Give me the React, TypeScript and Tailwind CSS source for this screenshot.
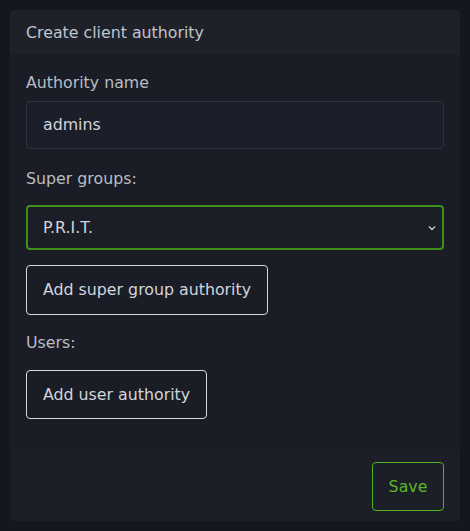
import React from "react";

export default function App() {
  const font = { fontFamily: '"DejaVu Sans", sans-serif' };
  return (
    <div className="min-h-[531px] w-full bg-[#14171e] p-[10px]" style={font}>
      <div className="flex flex-col rounded-[4px] bg-[#1a1d25] overflow-hidden">
        <div className="flex h-[44px] items-center bg-[#1e2129] px-4 pt-[2px] text-[15.8px] text-[#c0c4cc]">
          Create client authority
        </div>
        <div className="flex flex-col px-4 pt-4 pb-[31px] text-[15.8px] leading-6 text-[#b9bdc5]">
          <label className="mb-[7px]">
            <span className="relative top-[1px]">Authority name</span>
          </label>
          <div className="flex h-[48px] items-center rounded-[4px] border border-[#2e323d] bg-[#1c1f29] px-4 text-[#d2d5dc]">
            admins
          </div>
          <label className="mt-[17px] mb-[15px]">
            <span className="relative top-[1px]">Super groups:</span>
          </label>
          <div className="flex h-[45px] items-center justify-between rounded-[4px] border-2 border-[#3f8f1b] bg-[#1b1e27] pl-[15px] pr-[6px] text-[#d2d5dc]">
            <span>P.R.I.T.</span>
            <svg width="8" height="6" viewBox="0 0 8 6" className="mt-[1px]">
              <path d="M1 1.5 L4 4.5 L7 1.5" fill="none" stroke="#c8ccd4" strokeWidth="1.3" />
            </svg>
          </div>
          <div className="mt-[15px] flex">
            <button className="h-[50px] rounded-[4px] border border-[#d6d8dc] px-4 text-[#d2d5dc]">
              Add super group authority
            </button>
          </div>
          <label className="mt-[15px] mb-[16px]">
            <span className="relative top-[1px]">Users:</span>
          </label>
          <div className="flex">
            <button className="h-[49px] rounded-[4px] border border-[#d6d8dc] px-4 text-[#d2d5dc]">
              Add user authority
            </button>
          </div>
        </div>
        <div className="flex h-[71px] justify-end bg-[#1c1f27] px-4 pt-[12px]">
          <button className="h-[49px] w-[72px] rounded-[4px] border border-[#52b51c] text-[15.8px] text-[#5cb82a]">
            Save
          </button>
        </div>
      </div>
    </div>
  );
}
